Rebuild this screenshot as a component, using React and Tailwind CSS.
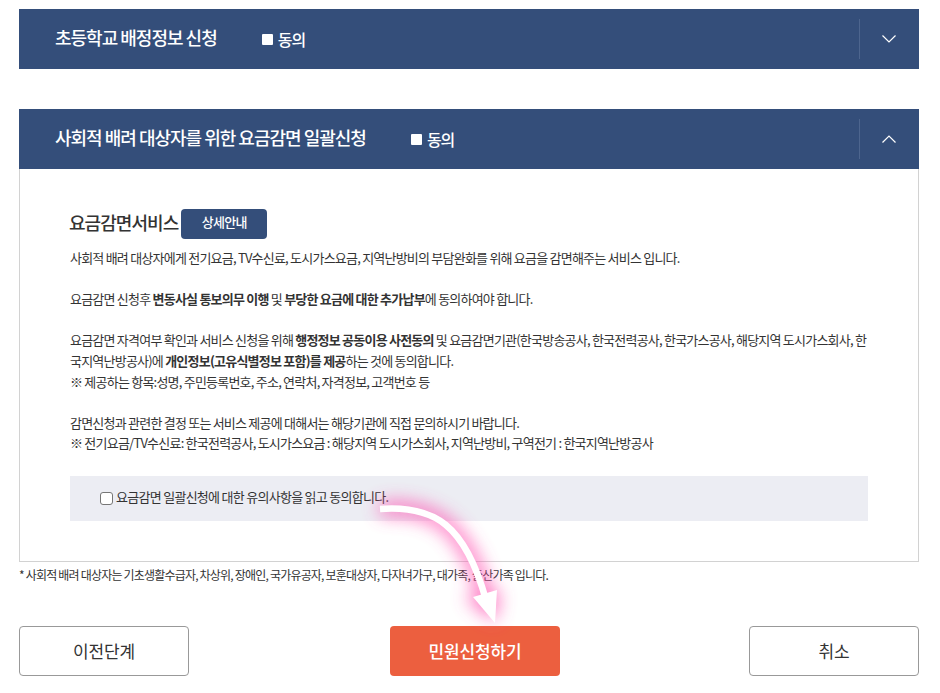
import React from "react";

const font = { fontFamily: '"Noto Sans CJK KR", "Noto Sans", sans-serif' };

const AccordionHead = ({ title, open }) => (
  <div className="flex h-[60px] items-center bg-[#344e7a] text-white">
    <div className="w-[840px] flex items-center pl-9">
      <h2 className="text-[18px] font-medium tracking-[-1px] leading-[24px] -mt-1 whitespace-nowrap">{title}</h2>
      <span className="ml-[45px] flex items-center text-[16px] font-medium tracking-[-1px]">
        <span className="mr-[5px] h-[11px] w-[11px] rounded-[1px] bg-white" />
        동의
      </span>
    </div>
    <div className="flex h-10 flex-1 items-center justify-center border-l border-[#4d658e]">
      <svg width="14" height="8" viewBox="0 0 14 8" fill="none" stroke="#fff" strokeWidth="1.2" className="-ml-[2px]">
        {open ? <path d="M0.5 7.5L7 1l6.5 6.5" /> : <path d="M0.5 0.5L7 7l6.5-6.5" />}
      </svg>
    </div>
  </div>
);

export default function App() {
  return (
    <div className="relative h-[693px] w-[940px] overflow-hidden bg-white pl-[19px] pt-[9px] text-[#333]" style={font}>
      <div className="w-[900px]">
        <AccordionHead title="초등학교 배정정보 신청" open={false} />

        <div className="mt-10">
          <AccordionHead title="사회적 배려 대상자를 위한 요금감면 일괄신청" open />
          <div className="h-[393px] border-x border-b border-[#d2d2d2] px-[50px] pt-10">
            <div className="flex h-[30px] items-center">
              <h3 className="-ml-px -mt-1 text-[18px] font-medium tracking-[-0.95px] text-[#333]">요금감면서비스</h3>
              <span className="ml-[3px] flex h-[30px] w-[86px] items-center justify-center rounded-[4px] bg-[#344e7a] pb-1 text-[13px] font-medium tracking-[-0.75px] text-white">
                상세안내
              </span>
            </div>

            <div className="mt-[9px] w-[800px] break-all text-[13px] leading-[20.6px] tracking-[-0.78px] text-[#333]">
              <p>사회적 배려 대상자에게 전기요금, TV수신료, 도시가스요금, 지역난방비의 부담완화를 위해 요금을 감면해주는 서비스 입니다.</p>
              <p className="mt-[20.6px]">
                요금감면 신청후 <b className="font-bold">변동사실 통보의무 이행</b> 및 <b className="font-bold">부당한 요금에 대한 추가납부</b>에 동의하여야 합니다.
              </p>
              <p className="mt-[20.6px]">
                요금감면 자격여부 확인과 서비스 신청을 위해 <b className="font-bold">행정정보 공동이용 사전동의</b> 및 요금감면기관(한국방송공사, 한국전력공사, 한국가스공사, 해당지역 도시가스회사, 한국지역난방공사)에 <b className="font-bold">개인정보(고유식별정보 포함)를 제공</b>하는 것에 동의합니다.
              </p>
              <p>※ 제공하는 항목:성명, 주민등록번호, 주소, 연락처, 자격정보, 고객번호 등</p>
              <p className="mt-[20.6px]">감면신청과 관련한 결정 또는 서비스 제공에 대해서는 해당기관에 직접 문의하시기 바랍니다.</p>
              <p>※ 전기요금/TV수신료: 한국전력공사, 도시가스요금 : 해당지역 도시가스회사, 지역난방비, 구역전기 : 한국지역난방공사</p>
            </div>

            <label className="mt-[22px] flex h-[45px] items-center bg-[#ecedf3] pb-[3px] pl-[30px] text-[13px] tracking-[-0.72px]">
              <span className="mr-[3px] mt-[3px] h-[13px] w-[13px] rounded-[3px] border border-[#767676] bg-white" />
              요금감면 일괄신청에 대한 유의사항을 읽고 동의합니다.
            </label>
          </div>
        </div>

        <p className="mt-[4px] text-[12px] leading-[18px] tracking-[-0.8px] text-[#333]">
          * 사회적 배려 대상자는 기초생활수급자, 차상위, 장애인, 국가유공자, 보훈대상자, 다자녀가구, 대가족, 출산가족 입니다.
        </p>

        <div className="mt-[42px] flex items-center">
          <button className="h-[50px] w-[170px] rounded-[4px] border border-[#999] bg-white text-[17px] tracking-[-0.1px] text-[#333]">이전단계</button>
          <button className="ml-[201px] h-[50px] w-[170px] rounded-[4px] bg-[#ec5f3f] text-[17px] font-medium tracking-[-0.1px] text-white">민원신청하기</button>
          <button className="ml-auto h-[50px] w-[170px] rounded-[4px] border border-[#999] bg-white text-[17px] tracking-[-0.1px] text-[#333]">취소</button>
        </div>
      </div>

      {/* pink glowing arrow */}
      <svg className="pointer-events-none absolute left-[340px] top-[480px]" width="240" height="160" viewBox="0 0 240 160" fill="none">
        <defs>
          <filter id="glow" x="-40%" y="-40%" width="180%" height="180%">
            <feGaussianBlur stdDeviation="9" />
          </filter>
        </defs>
        <g filter="url(#glow)" opacity="0.8">
          <path d="M40 29C95 25 125 45 146 118" stroke="#ff4fb0" strokeWidth="14" />
          <path d="M124 117L160 111L155 142Z" fill="#ff4fb0" />
        </g>
        <path d="M40 29C95 25 125 45 146 120" stroke="#fff" strokeWidth="6.5" />
        <path d="M133 117L157 110L155 143Z" fill="#fff" />
      </svg>
    </div>
  );
}
